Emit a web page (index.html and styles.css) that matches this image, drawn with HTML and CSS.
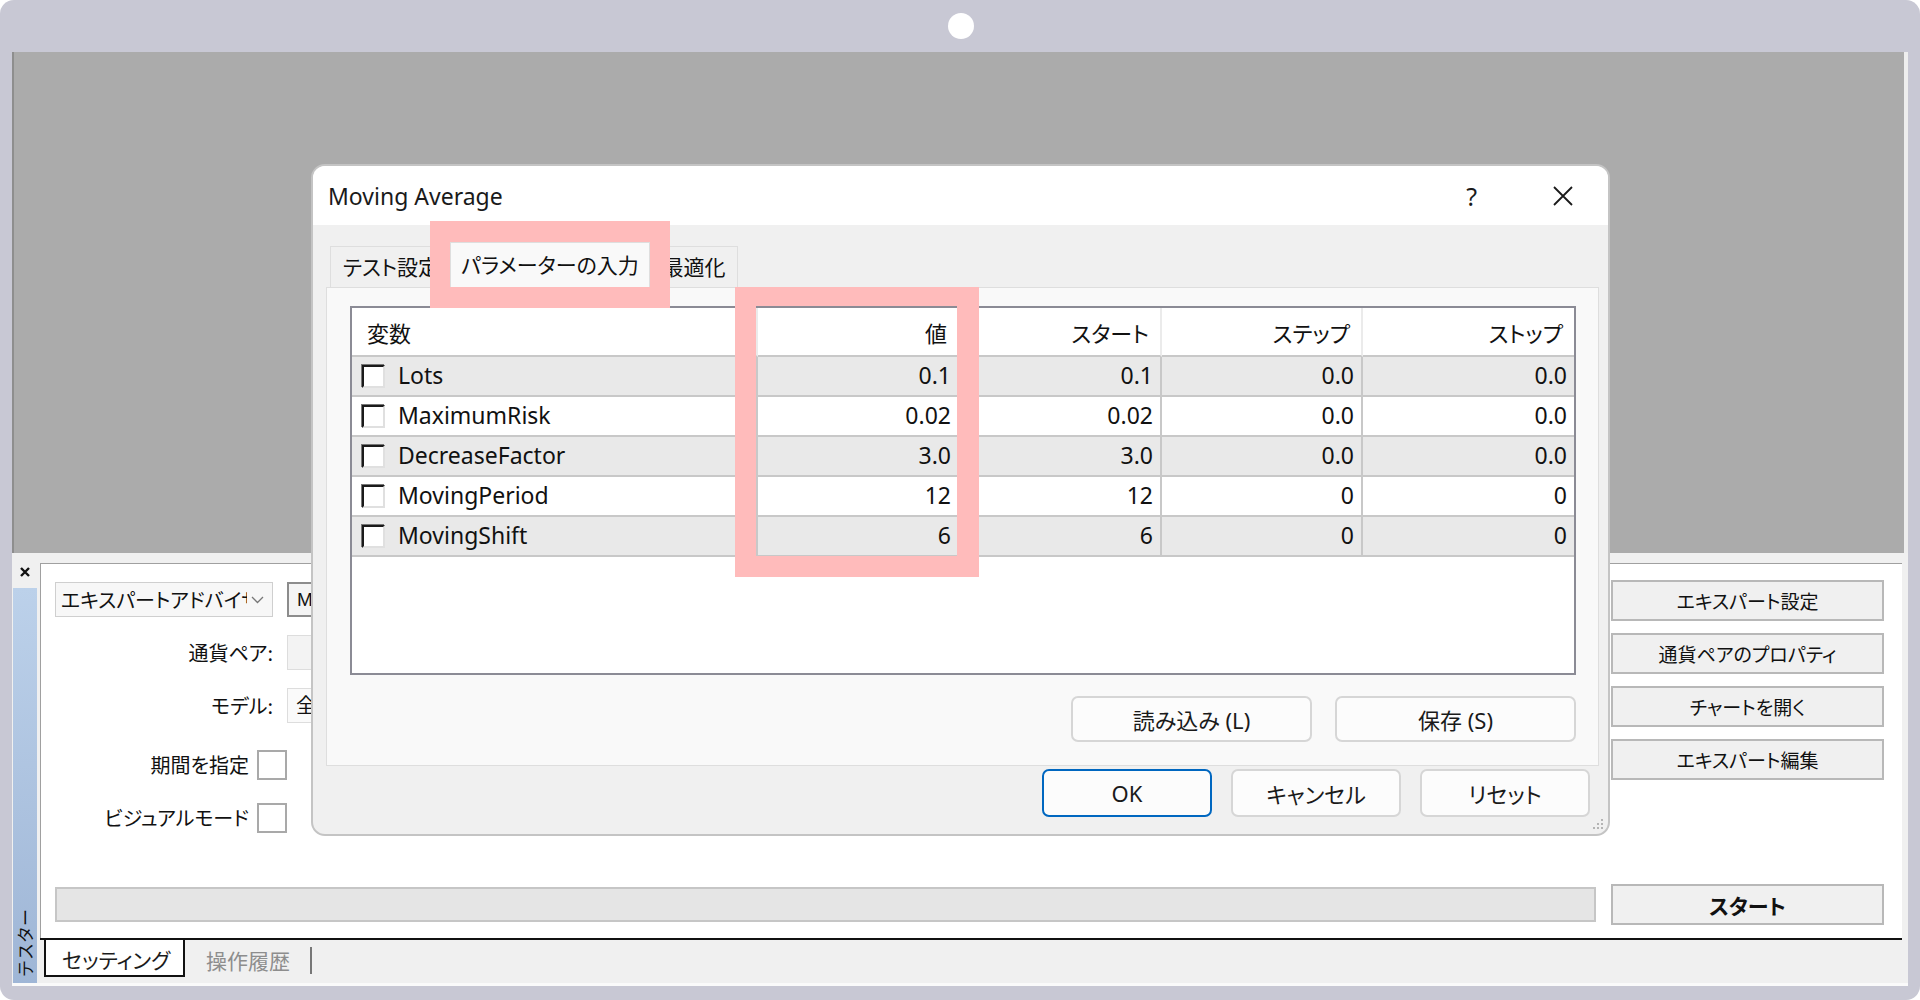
FILE: index.html
```html
<!DOCTYPE html>
<html lang="ja">
<head>
    <meta charset="UTF-8">
    <meta name="viewport" content="width=device-width, initial-scale=1.0">
    <title>Moving Average - テスター</title>
    <link rel="stylesheet" href="styles.css">
</head>
<body>

<div class="frame">
    <div class="frame-top"><span class="camera"></span></div>

    <div class="workspace">
        <!-- empty chart area behind the dialog -->
        <div class="chart-area"></div>

        <!-- Strategy tester panel -->
        <div class="tester">
            <div class="tester-side">
                <svg class="side-close" width="10" height="10" viewBox="0 0 10 10">
                    <path d="M1 1 L9 9 M9 1 L1 9" stroke="#111" stroke-width="2.4" fill="none"/>
                </svg>
                <div class="side-bar"><span class="side-label">テスター</span></div>
            </div>

            <div class="tester-main">
                <div class="tester-content">
                    <div class="settings">
                        <div class="settings-form">
                            <div class="form-row">
                                <div class="select">
                                    <span class="select-text">エキスパートアドバイザ</span>
                                    <svg class="chevron" width="13" height="8" viewBox="0 0 13 8">
                                        <path d="M1 1 L6.5 6.5 L12 1" stroke="#777" stroke-width="1.3" fill="none"/>
                                    </svg>
                                </div>
                                <div class="field field-dark">Moving Average</div>
                            </div>
                            <div class="form-row">
                                <span class="form-label">通貨ペア:</span>
                                <div class="field field-flat"></div>
                            </div>
                            <div class="form-row">
                                <span class="form-label">モデル:</span>
                                <div class="field field-light">全ティック</div>
                            </div>
                            <div class="check-row first-check">
                                <span class="check-label">期間を指定</span>
                                <span class="check-box"></span>
                            </div>
                            <div class="check-row">
                                <span class="check-label">ビジュアルモード</span>
                                <span class="check-box"></span>
                            </div>
                        </div>

                        <div class="settings-actions">
                            <button class="panel-btn">エキスパート設定</button>
                            <button class="panel-btn">通貨ペアのプロパティ</button>
                            <button class="panel-btn">チャートを開く</button>
                            <button class="panel-btn">エキスパート編集</button>
                        </div>
                    </div>

                    <div class="run-row">
                        <div class="progress"></div>
                        <button class="panel-btn start-btn">スタート</button>
                    </div>
                </div>

                <div class="tester-tabs">
                    <span class="ttab active">セッティング</span>
                    <span class="ttab">操作履歴</span>
                    <span class="ttab-sep"></span>
                </div>
            </div>
        </div>
    </div>

    <!-- Expert properties dialog -->
    <div class="dialog">
        <div class="dialog-title">
            <span class="dialog-name">Moving Average</span>
            <span class="title-help">?</span>
            <svg class="title-close" width="20" height="20" viewBox="0 0 20 20">
                <path d="M1 1 L19 19 M19 1 L1 19" stroke="#1a1a1a" stroke-width="1.8" fill="none"/>
            </svg>
        </div>

        <div class="dialog-body">
            <div class="dlg-tabs">
                <span class="dlg-tab tab-first">テスト設定</span>
                <span class="dlg-tab active">パラメーターの入力</span>
                <span class="dlg-tab tab-last">最適化</span>
            </div>

            <div class="dlg-panel">
                <div class="param-box">
                    <table class="param-table">
                        <colgroup>
                            <col class="c-name">
                            <col class="c-num">
                            <col class="c-num">
                            <col class="c-step">
                            <col class="c-last">
                        </colgroup>
                        <thead>
                            <tr>
                                <th class="name-head">変数</th>
                                <th>値</th>
                                <th>スタート</th>
                                <th>ステップ</th>
                                <th>ストップ</th>
                            </tr>
                        </thead>
                        <tbody>
                            <tr class="odd">
                                <td class="name-cell"><span class="row-check"></span>Lots</td>
                                <td>0.1</td><td>0.1</td><td>0.0</td><td>0.0</td>
                            </tr>
                            <tr>
                                <td class="name-cell"><span class="row-check"></span>MaximumRisk</td>
                                <td>0.02</td><td>0.02</td><td>0.0</td><td>0.0</td>
                            </tr>
                            <tr class="odd">
                                <td class="name-cell"><span class="row-check"></span>DecreaseFactor</td>
                                <td>3.0</td><td>3.0</td><td>0.0</td><td>0.0</td>
                            </tr>
                            <tr>
                                <td class="name-cell"><span class="row-check"></span>MovingPeriod</td>
                                <td>12</td><td>12</td><td>0</td><td>0</td>
                            </tr>
                            <tr class="odd">
                                <td class="name-cell"><span class="row-check"></span>MovingShift</td>
                                <td>6</td><td>6</td><td>0</td><td>0</td>
                            </tr>
                        </tbody>
                    </table>
                </div>

                <div class="panel-actions">
                    <button class="dlg-btn wide">読み込み (L)</button>
                    <button class="dlg-btn wide">保存 (S)</button>
                </div>
            </div>

            <div class="dialog-actions">
                <button class="dlg-btn default">OK</button>
                <button class="dlg-btn">キャンセル</button>
                <button class="dlg-btn">リセット</button>
            </div>

            <svg class="grip" width="12" height="12" viewBox="0 0 12 12">
                <rect x="9" y="1" width="2" height="2" fill="#b4b4b4"/>
                <rect x="5" y="5" width="2" height="2" fill="#b4b4b4"/>
                <rect x="9" y="5" width="2" height="2" fill="#b4b4b4"/>
                <rect x="1" y="9" width="2" height="2" fill="#b4b4b4"/>
                <rect x="5" y="9" width="2" height="2" fill="#b4b4b4"/>
                <rect x="9" y="9" width="2" height="2" fill="#b4b4b4"/>
            </svg>
        </div>
    </div>

    <!-- highlight marks -->
    <div class="mark mark-tab"></div>
    <div class="mark mark-col"></div>
</div>

</body>
</html>
```

FILE: styles.css
```css
body {
    margin: 0;
    background: #ffffff;
}

.frame {
    position: relative;
    width: 1920px;
    height: 1000px;
    background: #c8c8d4;
    border-radius: 14px;
    display: flex;
    flex-direction: column;
    overflow: hidden;
    font-family: "Noto Sans CJK JP", sans-serif;
    color: #111;
}

.frame-top {
    height: 52px;
    display: flex;
    align-items: center;
    justify-content: center;
}

.camera {
    width: 26px;
    height: 26px;
    margin-left: 2px;
    border-radius: 50%;
    background: #ffffff;
}

.workspace {
    flex: 1;
    margin: 0 12px 14px 12px;
    display: flex;
    flex-direction: column;
    background: #f0f0f0;
}

.chart-area {
    height: 501px;
    box-sizing: border-box;
    background: #ababab;
    border-left: 2px solid #8e8e8e;
    border-right: 4px solid #eeeeee;
}

/* Tester panel */
.tester {
    flex: 1;
    display: flex;
    background: #f0f0f0;
    border-bottom: 3px solid #fafafa;
}

.tester-side {
    width: 28px;
    display: flex;
    flex-direction: column;
}

.side-close {
    margin: 14px 0 0 8px;
}

.side-bar {
    flex: 1;
    width: 24px;
    margin: 11px 0 0 1px;
    background: linear-gradient(#bcd1ea, #9fb6d6);
    display: flex;
    align-items: flex-end;
    justify-content: center;
}

.side-label {
    writing-mode: vertical-rl;
    text-orientation: sideways;
    transform: rotate(180deg);
    font-size: 17px;
    line-height: 22px;
    margin-bottom: 6px;
    color: #111;
}

.tester-main {
    flex: 1;
    display: flex;
    flex-direction: column;
    padding: 10px 6px 0 0;
}

.tester-content {
    flex: 1;
    background: #ffffff;
    border-top: 1px solid #a0a0a0;
    border-left: 1px solid #a0a0a0;
    display: flex;
    flex-direction: column;
    padding: 9px 18px 13px 14px;
    font-size: 20px;
    font-feature-settings: "palt";
}

.settings {
    display: flex;
    justify-content: space-between;
}

.form-row {
    height: 53px;
    display: grid;
    grid-template-columns: 218px 200px;
    column-gap: 14px;
    align-items: center;
}

.select {
    height: 35px;
    box-sizing: border-box;
    border: 1px solid #cfcfcf;
    background: #f7f7f7;
    display: flex;
    align-items: center;
    padding: 0 8px 0 5px;
}

.select-text {
    flex: 1;
    overflow: hidden;
    white-space: nowrap;
}

.chevron {
    margin-left: 4px;
}

.field {
    height: 35px;
    box-sizing: border-box;
    padding-left: 8px;
    line-height: 31px;
    white-space: nowrap;
    overflow: hidden;
}

.field-dark {
    border: 2px solid #8c8c8c;
    background: #f4f4f4;
    font-family: "Liberation Sans", sans-serif;
    font-size: 19px;
}

.field-flat {
    border: 1px solid #dddddd;
    background: #f3f3f3;
}

.field-light {
    border: 1px solid #dddddd;
    background: #fafafa;
}

.form-label {
    text-align: right;
}

.check-row {
    width: 232px;
    height: 53px;
    display: flex;
    align-items: center;
    justify-content: flex-end;
    gap: 8px;
    white-space: nowrap;
}

.first-check {
    margin-top: 6px;
}

.check-box {
    flex: none;
    width: 30px;
    height: 30px;
    box-sizing: border-box;
    border: 2px solid #a9a9a9;
    background: #ffffff;
}

.settings-actions {
    width: 273px;
    padding-top: 7px;
    display: flex;
    flex-direction: column;
    gap: 12px;
}

.panel-btn {
    height: 41px;
    box-sizing: border-box;
    border: 2px solid #b8b8b8;
    background: #f0f0f0;
    font-family: inherit;
    font-feature-settings: "palt";
    font-size: 19px;
    color: #111;
    padding: 0;
}

.run-row {
    margin-top: auto;
    display: flex;
    align-items: center;
    gap: 15px;
}

.progress {
    flex: 1;
    height: 35px;
    box-sizing: border-box;
    border: 2px solid #c6c6c6;
    background: #e5e5e5;
}

.start-btn {
    width: 273px;
    font-weight: bold;
    font-size: 21px;
}

.tester-tabs {
    height: 45px;
    box-sizing: border-box;
    border-top: 2px solid #111;
    display: flex;
    align-items: flex-start;
    font-size: 21px;
    font-feature-settings: "palt";
    white-space: nowrap;
}

.ttab {
    margin-left: 21px;
    line-height: 40px;
    color: #8d8d8d;
}

.ttab.active {
    width: 141px;
    height: 37px;
    box-sizing: border-box;
    margin-left: 4px;
    padding-left: 16px;
    line-height: 38px;
    background: #ffffff;
    border: 2px solid #111;
    border-top: none;
    color: #1b1b1b;
}

.ttab-sep {
    width: 2px;
    height: 27px;
    margin: 7px 0 0 20px;
    background: #777777;
}

/* Dialog */
.dialog {
    position: absolute;
    left: 311px;
    top: 164px;
    width: 1299px;
    height: 672px;
    box-sizing: border-box;
    border: 2px solid #c4c4c4;
    border-radius: 14px;
    overflow: hidden;
    background: #f0f0f0;
    font-family: "Noto Sans", "Noto Sans CJK JP", sans-serif;
    font-feature-settings: "palt";
    font-size: 23px;
    color: #111;
}

.dialog-title {
    height: 59px;
    background: #ffffff;
    display: flex;
    align-items: center;
    padding: 0 35px 0 15px;
}

.dialog-name {
    flex: 1;
    font-size: 23px;
    color: #1a1a1a;
}

.title-help {
    font-size: 25px;
    margin-right: 76px;
    color: #1a1a1a;
}

.dialog-body {
    position: relative;
    height: 609px;
    box-sizing: border-box;
    padding: 17px 9px 0 13px;
}

.dlg-tabs {
    height: 45px;
    display: flex;
    align-items: flex-end;
    padding-left: 4px;
    font-size: 21px;
}

.dlg-tab {
    height: 41px;
    box-sizing: border-box;
    border: 1px solid #dedede;
    border-bottom: none;
    background: #f0f0f0;
    line-height: 40px;
    white-space: nowrap;
    overflow: hidden;
}

.tab-first {
    width: 120px;
    padding-left: 12px;
}

.dlg-tab.active {
    width: 200px;
    height: 45px;
    line-height: 44px;
    text-align: center;
    background: #f9f9f9;
}

.tab-last {
    width: 88px;
    text-align: center;
}

.dlg-panel {
    height: 479px;
    box-sizing: border-box;
    border: 1px solid #dedede;
    background: #f9f9f9;
    padding: 18px 22px 0 23px;
}

.param-box {
    height: 369px;
    box-sizing: border-box;
    border: 2px solid #8b8b95;
    background: #ffffff;
}

.param-table {
    width: 100%;
    table-layout: fixed;
    border-collapse: separate;
    border-spacing: 0;
}

.c-name { width: 406px; }
.c-num { width: 202px; }
.c-step { width: 201px; }
.c-last { width: 211px; }

.param-table th {
    height: 49px;
    box-sizing: border-box;
    padding: 0 11px 0 0;
    text-align: right;
    font-weight: normal;
    font-size: 22px;
    border-bottom: 2px solid #c8c8c8;
    border-right: 2px solid #ebebeb;
}

.param-table th.name-head {
    text-align: left;
    padding-left: 15px;
}

.param-table td {
    height: 40px;
    box-sizing: border-box;
    padding: 0 7px 0 0;
    text-align: right;
    line-height: 1.2;
    border-bottom: 2px solid #c8c8c8;
    border-right: 2px solid #c8c8c8;
}

.param-table th:last-child,
.param-table td:last-child {
    border-right: none;
}

.param-table tr.odd td {
    background: #e9e9e9;
}

.param-table td.name-cell {
    text-align: left;
    padding-left: 10px;
    white-space: nowrap;
}

.row-check {
    display: inline-block;
    width: 23px;
    height: 23px;
    box-sizing: border-box;
    margin-right: 13px;
    vertical-align: -4px;
    background: #ffffff;
    border: 2px solid;
    border-color: #1a1a1a #e0e0e0 #e0e0e0 #1a1a1a;
    box-shadow: -1px -1px 0 #777777;
}

.panel-actions {
    margin-top: 21px;
    display: flex;
    justify-content: flex-end;
    gap: 23px;
}

.dlg-btn {
    width: 170px;
    height: 48px;
    box-sizing: border-box;
    border: 2px solid #d6d6d6;
    border-radius: 7px;
    background: #fcfcfc;
    font-family: inherit;
    font-feature-settings: "palt";
    font-size: 22px;
    color: #1a1a1a;
    padding: 0;
}

.dlg-btn.wide {
    width: 241px;
    height: 46px;
}

.dlg-btn.default {
    border-color: #0067c0;
}

.dialog-actions {
    margin-top: 3px;
    display: flex;
    justify-content: flex-end;
    gap: 19px;
    padding-right: 9px;
}

.grip {
    position: absolute;
    right: 4px;
    bottom: 4px;
}

/* highlight marks */
.mark {
    position: absolute;
    box-sizing: border-box;
    border: 0 solid #ffbbbb;
}

.mark-tab {
    left: 430px;
    top: 221px;
    width: 240px;
    height: 87px;
    border-width: 21px 20px 21px 20px;
}

.mark-col {
    left: 735px;
    top: 287px;
    width: 244px;
    height: 290px;
    border-width: 19px 22px 21px 21px;
}
```
